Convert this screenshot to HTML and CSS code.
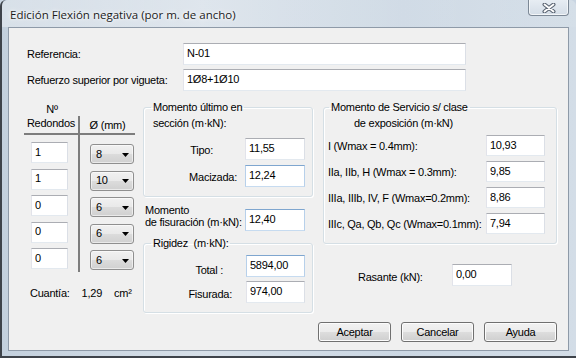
FILE: index.html
```html
<!DOCTYPE html>
<html lang="es">
<head>
  <meta charset="UTF-8" />
  <meta name="viewport" content="width=device-width, initial-scale=1.0" />
  <title>Edición Flexión negativa (por m. de ancho)</title>
  <link rel="stylesheet" href="styles.css">
</head>
<body>
  <div class="window">
    <div class="titlebar">
      <span class="title">Edición Flexión negativa (por m. de ancho)</span>
      <div class="close">
        <svg width="14" height="10" viewBox="0 0 14 10">
          <path d="M2.5 1.5 L11.5 8.5 M11.5 1.5 L2.5 8.5" stroke="#5a6472" stroke-width="4" stroke-linecap="round" fill="none"/>
          <path d="M2.5 1.5 L11.5 8.5 M11.5 1.5 L2.5 8.5" stroke="#fff" stroke-width="1.8" stroke-linecap="round" fill="none"/>
        </svg>
      </div>
    </div>

    <div class="client">
      <div class="field-row">
        <label class="top-label">Referencia:</label>
        <input class="tb wide" type="text" value="N-01">
      </div>
      <div class="field-row second">
        <label class="top-label">Refuerzo superior por vigueta:</label>
        <input class="tb wide" type="text" value="1Ø8+1Ø10">
      </div>

      <div class="main">
        <!-- redondos -->
        <div class="col-left">
          <div class="nr">Nº</div>
          <div class="bars">
            <div class="hc1">Redondos</div>
            <div class="hc2">Ø (mm)</div>
            <div class="dc1">
              <input class="tb count" type="text" value="1">
              <input class="tb count" type="text" value="1">
              <input class="tb count" type="text" value="0">
              <input class="tb count" type="text" value="0">
              <input class="tb count" type="text" value="0">
            </div>
            <div class="dc2">
              <div class="combo"><span>8</span><svg width="7" height="4" viewBox="0 0 7 4"><path d="M0 0 H7 L3.5 4 Z" fill="#000"/></svg></div>
              <div class="combo"><span>10</span><svg width="7" height="4" viewBox="0 0 7 4"><path d="M0 0 H7 L3.5 4 Z" fill="#000"/></svg></div>
              <div class="combo"><span>6</span><svg width="7" height="4" viewBox="0 0 7 4"><path d="M0 0 H7 L3.5 4 Z" fill="#000"/></svg></div>
              <div class="combo"><span>6</span><svg width="7" height="4" viewBox="0 0 7 4"><path d="M0 0 H7 L3.5 4 Z" fill="#000"/></svg></div>
              <div class="combo"><span>6</span><svg width="7" height="4" viewBox="0 0 7 4"><path d="M0 0 H7 L3.5 4 Z" fill="#000"/></svg></div>
            </div>
          </div>
          <div class="cuantia">
            <span>Cuantía:</span><span class="gap">1,29</span><span class="gap">cm²</span>
          </div>
        </div>

        <!-- momentos -->
        <div class="col-mid">
          <fieldset class="gb">
            <legend>Momento último en</legend>
            <div class="line2">sección (m·kN):</div>
            <div class="row first">
              <label class="lbl tipo">Tipo:</label>
              <input class="tb num" type="text" value="11,55">
            </div>
            <div class="row">
              <label class="lbl maciz">Macizada:</label>
              <input class="tb num hot" type="text" value="12,24">
            </div>
          </fieldset>

          <div class="fis">
            <label class="fis-lbl">Momento<br>de fisuración (m·kN):</label>
            <input class="tb num hot" type="text" value="12,40">
          </div>

          <fieldset class="gb rig">
            <legend>Rigidez&nbsp; (m·kN):</legend>
            <div class="row first">
              <label class="lbl total">Total :</label>
              <input class="tb num2 hot" type="text" value="5894,00">
            </div>
            <div class="row tight">
              <label class="lbl fisu">Fisurada:</label>
              <input class="tb num2" type="text" value="974,00">
            </div>
          </fieldset>
        </div>

        <!-- servicio -->
        <div class="col-right">
          <fieldset class="gb serv">
            <legend>Momento de Servicio s/ clase</legend>
            <div class="line2 indent">de exposición (m·kN)</div>
            <div class="srow"><label class="slbl">I (Wmax = 0.4mm):</label><input class="tb snum" type="text" value="10,93"></div>
            <div class="srow"><label class="slbl">IIa, IIb, H (Wmax = 0.3mm):</label><input class="tb snum" type="text" value="9,85"></div>
            <div class="srow"><label class="slbl">IIIa, IIIb, IV, F (Wmax=0.2mm):</label><input class="tb snum" type="text" value="8,86"></div>
            <div class="srow"><label class="slbl">IIIc, Qa, Qb, Qc (Wmax=0.1mm):</label><input class="tb snum" type="text" value="7,94"></div>
          </fieldset>

          <div class="rasante">
            <label class="ras-lbl">Rasante (kN):</label>
            <input class="tb num" type="text" value="0,00">
          </div>
        </div>
      </div>

      <div class="buttons">
        <button class="btn">Aceptar</button>
        <button class="btn">Cancelar</button>
        <button class="btn">Ayuda</button>
      </div>
    </div>
  </div>
</body>
</html>
```

FILE: styles.css
```css
* {
  box-sizing: border-box;
}
body {
  margin: 0;
  width: 576px;
  height: 358px;
  overflow: hidden;
  background: #c9d5e2;
  font-family: "Liberation Sans", Arial, sans-serif;
  font-size: 11px;
  letter-spacing: -0.25px;
  color: #000;
}

/* window frame */
.window {
  height: 358px;
  display: flex;
  flex-direction: column;
  background: linear-gradient(to right, #c3d0dd, #d6dfe8 35%, #cbd7e3 70%, #d3dde7);
  border-left: 2px solid #3e434a;
  border-bottom: 2px solid #3e434a;
  border-radius: 6px 6px 0 0;
}
.titlebar {
  height: 27px;
  display: flex;
  align-items: flex-start;
  background: linear-gradient(to right, rgba(255,255,255,0.35), rgba(255,255,255,0.15) 50%, rgba(255,255,255,0.05));
  border-radius: 6px 6px 0 0;
}
.title {
  margin: 7px 0 0 8px;
  font-family: "Open Sans", "Noto Sans", sans-serif;
  font-size: 11.5px;
  line-height: 16px;
  letter-spacing: 0;
  color: #1b1b1b;
  text-shadow: 0 0 6px #fff, 0 0 3px #fff;
}
.close {
  margin-left: auto;
  margin-right: 7px;
  width: 41px;
  height: 16px;
  border: 1px solid #7c8896;
  border-top: none;
  border-radius: 0 0 4px 4px;
  background: linear-gradient(#e7edf3, #d4dde7);
  box-shadow: inset 0 -1px 0 rgba(255,255,255,0.7), inset 1px 0 rgba(255,255,255,0.6), inset -1px 0 rgba(255,255,255,0.6);
  display: flex;
  align-items: center;
  justify-content: center;
}

.client {
  flex: 1;
  margin: 0 7px 5px 6px;
  background: #f0f0f0;
  border: 1px solid #8e9aa8;
  padding: 15px 11px 0 15px;
}

/* text boxes */
.tb {
  display: block;
  height: 22px;
  margin: 0;
  border: 1px solid;
  border-color: #abadb3 #dbdfe6 #e3e9ef #e2e3ea;
  background: #fff;
  padding: 0 3px 2px;
  font: inherit;
  letter-spacing: inherit;
  color: #000;
  outline: none;
}
.tb.hot {
  border-color: #7fa6cf #b7d0ea #c6dbf0 #b7d0ea;
}
.wide { width: 283px; }
.count { width: 37px; height: 21px; }
.num { width: 60px; }
.num2 { width: 59px; }
.snum { width: 59px; height: 21px; }

/* top form */
.field-row {
  display: flex;
  align-items: center;
}
.field-row.second {
  margin-top: 4px;
}
.top-label {
  width: 159px;
  padding-left: 3px;
}

/* three columns */
.main {
  margin-top: 9px;
  display: grid;
  grid-template-columns: 119px 180px 234px;
  align-items: start;
}

/* redondos */
.nr {
  width: 56px;
  margin-top: 2px;
  line-height: 14px;
  text-align: center;
}
.bars {
  display: grid;
  grid-template-columns: 56px 55px;
}
.hc1, .hc2 {
  line-height: 14px;
  text-align: center;
  border-bottom: 2px solid #7d7d7d;
}
.hc1 {
  border-right: 2px solid #7d7d7d;
  padding-bottom: 3px;
}
.hc2 {
  padding-top: 2px;
}
.dc1 {
  border-right: 2px solid #7d7d7d;
  padding: 7px 0 3px 7px;
  display: flex;
  flex-direction: column;
  gap: 5.5px;
}
.dc2 {
  padding: 9px 0 0 10px;
  display: flex;
  flex-direction: column;
  gap: 6.5px;
}
.combo {
  width: 44px;
  height: 20px;
  display: flex;
  align-items: center;
  justify-content: space-between;
  padding: 0 4px 1px 5px;
  border: 1px solid #8f8f8f;
  border-radius: 3px;
  background: linear-gradient(#f1f1f1, #e9e9e9 50%, #dcdcdc 50%, #d0d0d0);
  box-shadow: inset 0 0 0 1px rgba(255,255,255,0.55);
}
.combo svg {
  margin-top: 2px;
}
.cuantia {
  margin-top: 14px;
  padding-left: 6px;
  line-height: 14px;
}
.cuantia .gap {
  margin-left: 12px;
}

/* group boxes */
.gb {
  margin: 0;
  padding: 0 0 9px 0;
  min-width: 0;
  border: 1px solid #d5dfe5;
  border-radius: 3px;
  box-shadow: inset 1px 1px 0 #fff, 1px 1px 0 #fff;
}
.gb legend {
  margin-left: 7px;
  padding: 0 2px;
  line-height: 14px;
}
.col-mid .gb {
  width: 170px;
}
.line2 {
  margin-top: 2px;
  padding-left: 9px;
  line-height: 14px;
}
.line2.indent {
  padding-left: 30px;
}
.row {
  display: flex;
  align-items: center;
  margin-top: 5px;
}
.row.first {
  margin-top: 8px;
}
.rig .row.first {
  margin-top: 5px;
}
.row.tight {
  margin-top: 4px;
}
.lbl {
  width: 101px;
  text-align: right;
  padding-top: 2px;
}
.tipo { padding-right: 32px; }
.maciz { padding-right: 8px; }
.total { width: 102px; padding-right: 23px; padding-top: 8px; }
.fisu { width: 102px; padding-right: 14px; padding-top: 4px; }

.fis {
  display: flex;
  align-items: flex-start;
  margin-top: 7px;
}
.fis-lbl {
  width: 102px;
  padding-left: 2px;
  line-height: 12px;
}
.fis .tb {
  margin-top: 5px;
}
.rig {
  margin-top: 5px;
}

/* servicio */
.serv {
  width: 234px;
}
.serv legend {
  margin-left: 5px;
}
.srow {
  display: flex;
  align-items: center;
  margin-top: 5px;
}
.slbl {
  width: 162px;
  padding-left: 4px;
  white-space: nowrap;
}
.rasante {
  display: flex;
  align-items: center;
  margin-top: 20px;
}
.ras-lbl {
  width: 129px;
  padding-left: 35px;
  padding-top: 3px;
}

/* buttons */
.buttons {
  margin-top: 9px;
  display: flex;
  justify-content: flex-end;
  gap: 10px;
}
.btn {
  width: 73px;
  height: 20px;
  padding: 0;
  border: 1px solid #707070;
  border-radius: 3px;
  background: linear-gradient(#f2f2f2, #ebebeb 50%, #dddddd 50%, #cfcfcf);
  box-shadow: inset 0 0 0 1px #fcfcfc;
  font: inherit;
  letter-spacing: inherit;
  color: #000;
}
```
